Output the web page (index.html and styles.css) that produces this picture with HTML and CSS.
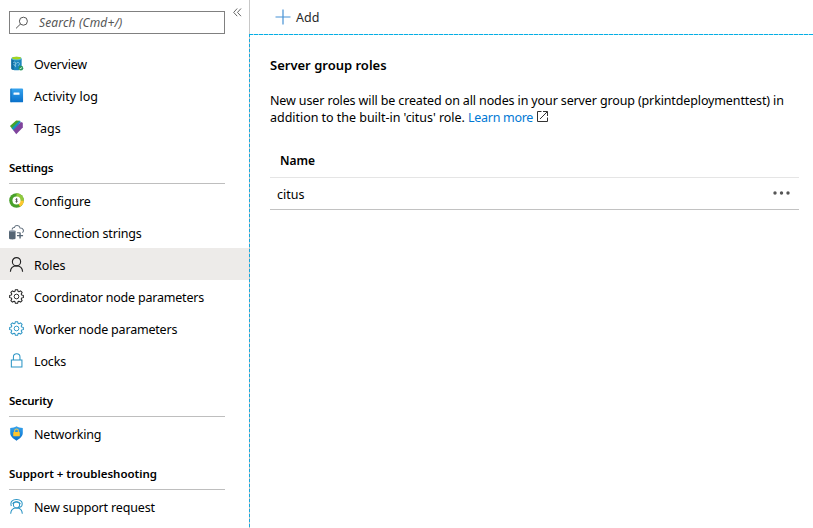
FILE: index.html
```html
<!DOCTYPE html>
<html lang="en">
<head>
<meta charset="utf-8">
<title>Server group roles</title>
<link rel="stylesheet" href="styles.css">
</head>
<body>
<svg class="defs" width="0" height="0">
  <defs>
    <linearGradient id="blue" x1="0" y1="0" x2="0" y2="1"><stop offset="0" stop-color="#36a3ee"/><stop offset="1" stop-color="#0870ca"/></linearGradient>
    <symbol id="gear" viewBox="0 0 16 16">
      <path transform="translate(8 8)" fill="none" stroke="currentColor" stroke-width="1.1" stroke-linejoin="round" d="M-1.2-7.3H1.2L1.7-5.4 2.6-5 4.3-6 6-4.3 5-2.6 5.4-1.7 7.3-1.2V1.2L5.4 1.7 5 2.6 6 4.3 4.3 6 2.6 5 1.7 5.4 1.2 7.3H-1.2L-1.7 5.4-2.6 5-4.3 6-6 4.3-5 2.6-5.4 1.7-7.3 1.2V-1.2L-5.4-1.7-5-2.6-6-4.3-4.3-6-2.6-5-1.7-5.4Z"/>
      <circle cx="8" cy="8" r="2.5" fill="none" stroke="currentColor"/>
    </symbol>
  </defs>
</svg>
<div class="app">
  <nav class="sidebar">
    <div class="top">
      <div class="search">
        <svg class="lens" viewBox="0 0 14 14"><circle cx="8.4" cy="5.2" r="4" /><path d="M5.5 8 1 12.4"/></svg>
        <span class="placeholder">Search (Cmd+/)</span>
      </div>
      <svg class="collapse" viewBox="0 0 9 9"><path d="M4.2.5.7 4.4l3.5 3.8M8 .5 4.5 4.4 8 8.2"/></svg>
    </div>
    <a class="item"><svg class="icon" viewBox="0 0 16 16"><path d="M2.500 3v10.300c0 1 2.400 1.900 5.500 1.900s5.500-.8 5.500-1.900V3z" fill="#1b86bd"/><path d="M2.500 3H5v12c-1.500-.3-2.500-1-2.500-1.700z" fill="#126c9f"/><ellipse cx="8" cy="2.700" rx="5.500" ry="1.900" fill="#5ab9dc"/><ellipse cx="8" cy="2.200" rx="4.800" ry="1.500" fill="#a4d51c"/><path d="M4.500 7c1.500-1.200 3 0 3.200 1 .6-1.500 3-1.500 3.500 0 .2 1-.7 2.200-1.700 2M7 7.500v4.300M5 8.500l1 2" fill="none" stroke="#8fcbe2" stroke-width=".9"/><circle cx="12.700" cy="13" r="2.500" fill="#28975b"/><path d="m11.300 13.800 2.700-1.500" stroke="#d5f2df"/></svg><span class="snug">Overview</span></a>
    <a class="item"><svg class="icon" viewBox="0 0 16 16"><rect x="1.500" y=".5" width="13.500" height="14.800" rx="1" fill="url(#blue)"/><path d="M1.500 1.500v12.800q0 1 1 1V.5q-1 0-1 1" fill="#0868b8"/><rect x="4.800" y="4.800" width="6.400" height="2.400" rx=".4" fill="#f4faff"/></svg><span>Activity log</span></a>
    <a class="item"><svg class="icon" viewBox="0 0 16 16"><path d="M1 6.500 7.600.5l4.400.4-8 9.300z" fill="#45a329"/><path d="m2.800 8.700 8-7.700 2 .8-7.300 10z" fill="#1593bc"/><path d="m4.500 10.800 8.200-8.800 2 1V8l-7 7.200z" fill="#7f449d"/></svg><span>Tags</span></a>

    <h2 class="section snug">Settings</h2>
    <a class="item"><svg class="icon" viewBox="0 0 16 16"><circle cx="8" cy="8" r="7.800" fill="#49a12b"/><path d="M8 8V.2A7.800 7.800 0 0 1 15.800 8z" fill="#91c93c"/><path d="M8 8h7.800a7.800 7.800 0 0 1-4 6.600z" fill="#ffc72e"/><circle cx="8" cy="8" r="4.300" fill="#fff"/><path d="M9.100 6.700C8.300 6.100 7.100 6.400 7.200 7.200c.2.900 1.800.6 1.800 1.600 0 .8-1.300.9-2.100.3M8 5.700v4.600" fill="none" stroke="#444" stroke-width=".8"/></svg><span class="tight">Configure</span></a>
    <a class="item"><svg class="icon" viewBox="0 0 16 16"><path d="M3.500 5C3.200 3 4.700 2.400 5.800 2.600 6.600-.1 11-.1 11.800 3.100c3.500-.2 4.700 3.600 2.400 5.100M8.500 8.200h3" fill="none" stroke="#62707e" stroke-width="1.100"/><path d="M0 6.500v8c0 1.200 7 1.200 7 0v-8z" fill="#566675"/><ellipse cx="3.500" cy="6.500" rx="3.500" ry="1" fill="#8290a0"/><path d="M11.800 8v6.500M8.500 11.300H15" stroke="#566675" stroke-width="1.500"/></svg><span class="tight">Connection strings</span></a>
    <a class="item selected"><svg class="icon" viewBox="0 0 16 16" fill="none" stroke="#222" stroke-width="1.200"><circle cx="8" cy="5" r="4.400"/><path d="M1.500 15.800c.2-3.900 2.800-6.400 6.500-6.400s6.300 2.500 6.500 6.400"/></svg><span>Roles</span></a>
    <a class="item"><svg class="icon"><use href="#gear"/></svg><span class="snug">Coordinator node parameters</span></a>
    <a class="item"><svg class="icon azure"><use href="#gear"/></svg><span class="snug">Worker node parameters</span></a>
    <a class="item"><svg class="icon azure" viewBox="0 0 16 16" fill="none" stroke="currentColor" stroke-width="1.100"><path d="M2.500 7.500h11.300V15H2.500zM4.700 7.500V4.200c0-4.600 7-4.600 7 0v3.300"/></svg><span class="tight">Locks</span></a>

    <h2 class="section snug">Security</h2>
    <a class="item"><svg class="icon" viewBox="0 0 16 16"><path d="M8 .3c2 1.500 4 1.600 6.700 1.700v5.500c0 3.500-3 6-6.700 8.100-3.700-2.100-6.700-4.600-6.700-8.100V2C4 1.900 6 1.800 8 .3" fill="url(#blue)"/><path d="M6 7V5.300c0-2.700 4-2.700 4 0V7" fill="none" stroke="#f4c94b" stroke-width="1.100"/><rect x="4.500" y="6.300" width="7" height="4.700" rx=".5" fill="#ffc52d"/></svg><span class="tight">Networking</span></a>

    <h2 class="section">Support + troubleshooting</h2>
    <a class="item"><svg class="icon azure" viewBox="0 0 16 16" fill="none" stroke="currentColor" stroke-width="1.100"><circle cx="8" cy="6.200" r="3.300"/><path d="M2.500 7.500C.8 2.500 4 .6 8 .6s7.200 2 5.700 6.500c-.5 1-1.700 1.800-4 1.700M3.800 5c1-2.500 7-2.500 8.400.3M1.800 15.700c.2-3.600 2.500-6 6.200-6s6 2.400 6.200 6"/></svg><span class="tight">New support request</span></a>
  </nav>

  <main class="main">
    <header class="toolbar">
      <svg class="plus" viewBox="0 0 16 16"><path d="M8 .5v15M.5 8h15"/></svg>
      <span>Add</span>
    </header>
    <section class="content">
      <h1 class="title">Server group roles</h1>
      <p class="intro"><span class="lead">New user roles will be created on all nodes in your server group (prkintdeploymenttest) in</span><br>addition to the built-in 'citus' role. <a class="link">Learn more</a><svg class="external" viewBox="0 0 11 11"><path d="M4.500.5h-4v10h10v-4M6 .5h4.500V5M10.300.7 3 8"/></svg></p>
      <div class="table">
        <div class="head">Name</div>
        <div class="row">
          <span>citus</span>
          <svg class="more" viewBox="0 0 17 4"><circle cx="2" cy="2" r="1.700"/><circle cx="8.500" cy="2" r="1.700"/><circle cx="15" cy="2" r="1.700"/></svg>
        </div>
      </div>
    </section>
  </main>
</div>
</body>
</html>
```
FILE: styles.css
```css
* { box-sizing: border-box; }
body {
  margin: 0;
  background: #fff;
  color: #000;
  font: 12.5px/17px "Noto Sans", "Open Sans", sans-serif;
}
.defs { display: block; }
.app { display: flex; width: 813px; height: 528px; overflow: hidden; }
.sidebar { width: 249px; flex: none; }
.top { display: flex; height: 47px; padding: 11px 0 0 9px; }
.search {
  display: flex;
  align-items: center;
  width: 216px;
  height: 23px;
  border: 1px solid #808080;
  padding-left: 5px;
}
.lens { width: 14px; height: 14px; fill: none; stroke: #555; }
.placeholder { margin-left: 10px; font-size: 12px; font-style: italic; color: #555; letter-spacing: .14px; }
.collapse { width: 9px; height: 9px; margin: -3px 0 0 8px; fill: none; stroke: #555; stroke-width: .9; }
.item { display: flex; align-items: center; height: 32px; padding-left: 9px; }
.item span { margin: 3px 0 0 10px; white-space: nowrap; }
.icon { width: 15px; height: 15px; flex: none; color: #222; }
.azure { color: #2b95c5; }
.selected { background: #edebe9; }
.tight { letter-spacing: -.16px; }
.snug { letter-spacing: -.2px; }
.section {
  height: 41px;
  width: 216px;
  margin: 0 0 0 9px;
  padding-top: 16px;
  border-bottom: 1px solid #bebebe;
  font-size: 11.5px;
  line-height: 17px;
  font-weight: 600;
}
.main { flex: 1; min-width: 0; display: flex; flex-direction: column; }
.toolbar {
  display: flex;
  align-items: center;
  height: 34px;
  padding-left: 25px;
  border-left: 1px solid #c8c8c8;
  color: #292929;
}
.toolbar span { margin-left: 5px; }
.plus { width: 16px; height: 16px; stroke: #4792d5; stroke-width: 1.2; }
.content {
  flex: 1;
  padding: 22px 14px 0 21px;
  background:
    repeating-linear-gradient(90deg, #00b0e8 0 4px, #c8d5da 4px 5px) 0 0 / 100% 1px no-repeat,
    repeating-linear-gradient(180deg, #19a9dc 0 3px, #c9c5c2 3px 5px) 0 0 / 1px 100% no-repeat;
}
.title { margin: 0; font-size: 13px; line-height: 18px; font-weight: 600; }
.intro { margin: 18px 0 0; white-space: nowrap; letter-spacing: -.03px; }
.lead { letter-spacing: -.13px; }
.link { color: #0078d4; letter-spacing: -.3px; }
.external { width: 11px; height: 11px; margin-left: 4px; fill: none; stroke: #333; }
.table { margin-top: 18px; width: 529px; }
.head { height: 34px; padding: 8px 10px 0; font-weight: 600; font-size: 12px; border-bottom: 1px solid #e5e5e5; }
.row {
  display: flex;
  align-items: center;
  justify-content: space-between;
  height: 32px;
  padding: 2px 9px 0 7px;
  border-bottom: 1px solid #c2c2c2;
}
.more { width: 17px; height: 4px; margin-top: -4px; fill: #555; }
```
